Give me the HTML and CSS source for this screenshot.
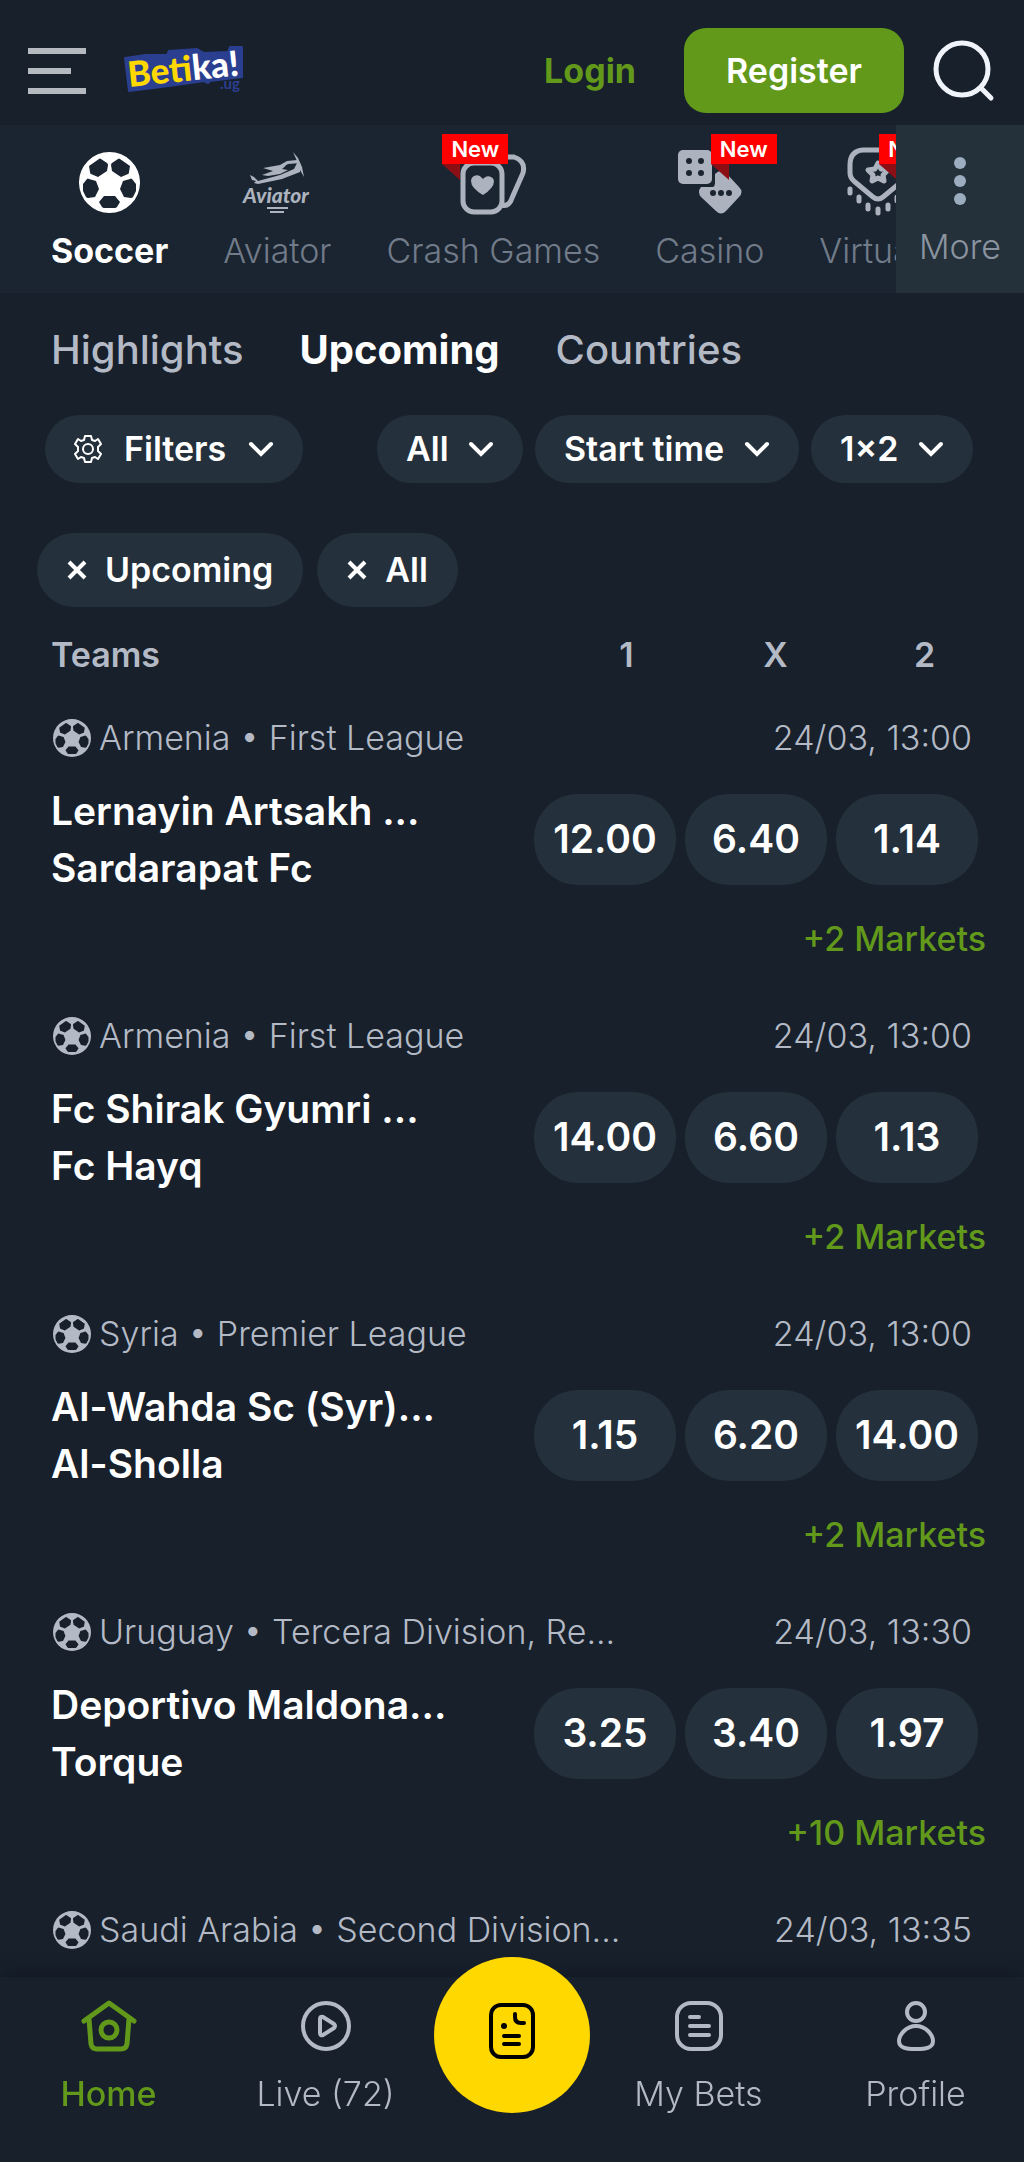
FILE: index.html
```html
<!DOCTYPE html>
<html lang="en">

	<head>
		<meta charset="UTF-8">
		<meta name="viewport" content="width=device-width, initial-scale=1">
		<title>Betika Uganda</title>
		<link rel="stylesheet" href="styles.css">
	</head>

	<body>
		<!--shared icons-->
		<svg class="sprite" aria-hidden="true">
			<symbol id="ball" viewBox="0 0 61 61">
				<path fill="currentColor" fill-rule="evenodd" d="M30.500 0a30.500 30.500 0 1 0 0 61a30.500 30.500 0 1 0 0-61zM10 14L20 7Q21 6 22 7L28 11Q29 12 29 13L28 19L19 25L12 22Q11 22 11 20zM51 14L41 7Q40 6 39 7L33 11Q32 12 32 13L33 19L42 25L49 22Q50 22 50 20zM4 32L8 27Q9 26 10 27L17 29L20 37L16 45L9 46Q8 46 7 45L4 39zM57 32L53 27Q52 26 51 27L44 29L41 37L45 45L52 46Q53 46 54 45L57 39zM25 44L36 44L41 50L38 55Q37 56 36 56L25 56Q24 56 23 55L20 50z" />
			</symbol>
			<symbol id="chevron" viewBox="0 0 26 16">
				<path d="M3 3L13 13L23 3" fill="none" stroke="currentColor" stroke-width="4" stroke-linecap="round" />
			</symbol>
			<symbol id="cross" viewBox="0 0 20 20">
				<path d="M2 2L18 18M18 2L2 18" stroke="currentColor" stroke-width="4" />
			</symbol>
		</svg>

		<header class="topbar">
			<button class="menu" aria-label="Menu">
				<span></span>
				<span></span>
				<span></span>
			</button>
			<a class="logo" href="#">
				<svg width="120" height="50" viewBox="0 0 120 50">
					<path d="M1 12L22 9L43 9L45 5L73 3L80 7L104 6L106 1L118 1L118 31L86 35L84 37L80 35L45 40L5 45z" fill="#2b3f90" stroke="#2b3f90" stroke-width="2" stroke-linejoin="round" />
					<text class="logo-text" x="5" y="41" transform="rotate(-6 5 41)"><tspan fill="#ffd800">Bet</tspan>ika!</text>
					<text class="logo-country" x="96" y="43">.ug</text>
				</svg>
			</a>
			<a class="login" href="#">Login</a>
			<button class="register">Register</button>
			<button class="search" aria-label="Search">
				<svg width="62" height="62" viewBox="0 0 62 62" fill="none" stroke="#f0f3fa" stroke-width="5" stroke-linecap="round">
					<circle cx="29" cy="29" r="26" />
					<path d="M48 48L58 58" />
				</svg>
			</button>
		</header>

		<nav class="sports">
			<div class="sports-list">
				<a class="sport choose" href="#">
					<span class="sport-icon"><svg width="61" height="61"><use href="#ball" /></svg></span>
					Soccer
				</a>
				<a class="sport" href="#">
					<span class="sport-icon">
						<svg width="70" height="62" viewBox="0 0 70 62" fill="#adb3be">
							<path d="M8 24L12 26L16 30L38 24L52 18L55 12L58 12L58 21L40 28L16 33L12 32L14 30L10 29z" />
							<path d="M21 17L38 14L45 10L55 9L58 12L46 13L40 18L46 19L38 23L26 25L20 24L31 20z" />
							<path d="M51 1L56 7L60 16L62 26L58 19L55 10z" />
							<path d="M44 14L50 13L49 17L42 18z" fill="#1a2531" />
							<text class="aviator-text" x="1" y="52">Aviator</text>
							<path d="M25 56h21v2h-21zM28 60h14v2h-14z" />
						</svg>
					</span>
					Aviator
				</a>
				<a class="sport" href="#">
					<span class="sport-icon">
						<svg width="66" height="66" viewBox="0 0 66 66" fill="none" stroke="#adb3be" stroke-width="5">
							<rect x="3" y="14" width="39" height="49" rx="11" />
							<path d="M43 8L54 8Q66 12 63 24L52 49Q49 58 42 56" />
							<path d="M23 46Q11 39 11 32A6 6 0 0 1 22 29L23 30L24 29A6 6 0 0 1 34 32Q34 39 23 46z" fill="#adb3be" stroke="none" />
						</svg>
						<span class="badge badge-left">New</span>
					</span>
					Crash Games
				</a>
				<a class="sport" href="#">
					<span class="sport-icon">
						<svg width="66" height="66" viewBox="0 0 66 66" fill="#adb3be">
							<rect x="1" y="1" width="34" height="34" rx="5" />
							<path d="M38 25Q44 19 50 25L62 38Q67 43 62 48L49 62Q44 67 39 62L24 48Q20 43 24 38L36 38Q38 37 38 34z" />
							<g fill="#1a2531">
								<circle cx="12" cy="12" r="3" />
								<circle cx="24" cy="12" r="3" />
								<circle cx="12" cy="24" r="3" />
								<circle cx="24" cy="24" r="3" />
								<circle cx="36" cy="44" r="3" />
								<circle cx="44" cy="44" r="3" />
								<circle cx="52" cy="44" r="3" />
							</g>
						</svg>
						<span class="badge">New</span>
					</span>
					Casino
				</a>
				<a class="sport" href="#">
					<span class="sport-icon">
						<svg width="66" height="70" viewBox="0 0 66 70" fill="none" stroke="#adb3be" stroke-width="5" stroke-linecap="round" stroke-linejoin="round">
							<path d="M18 3H48Q61 4 61 18V26Q61 31 56 35L38 50Q33 54 28 50L10 35Q5 31 5 26V18Q5 4 18 3z" />
							<path d="M33 16L36 22L43 23L38 28L39 34L33 31L27 34L28 28L23 23L30 22z" />
							<path d="M5 42v4M14 50v4M23 58v4M33 62v4M43 58v4M52 50v4M61 42v4" />
						</svg>
						<span class="badge">New</span>
					</span>
					Virtuals
				</a>
			</div>
			<button class="more">
				<svg width="14" height="50" viewBox="0 0 14 50" fill="#9cadbf">
					<circle cx="7" cy="7" r="6" />
					<circle cx="7" cy="25" r="6" />
					<circle cx="7" cy="43" r="6" />
				</svg>
				More
			</button>
		</nav>

		<main>
			<nav class="tabs">
				<a href="#">Highlights</a>
				<a class="choose" href="#">Upcoming</a>
				<a href="#">Countries</a>
			</nav>

			<div class="filters">
				<button class="pill filter-btn">
					<svg width="28" height="28" viewBox="0 0 28 28" fill="none" stroke="currentColor" stroke-width="2" stroke-linejoin="round">
						<path d="M11 1H17L18 5L21 6L24 4L27 9L24 12V16L27 19L24 24L21 22L18 23L17 27H11L10 23L7 22L4 24L1 19L4 16V12L1 9L4 4L7 6L10 5z" />
						<circle cx="14" cy="14" r="5" />
					</svg>
					Filters
					<svg class="chevron"><use href="#chevron" /></svg>
				</button>
				<label class="pill">
					<select aria-label="Sport">
						<option>All</option>
					</select>
					<svg class="chevron"><use href="#chevron" /></svg>
				</label>
				<label class="pill">
					<select aria-label="Sort by">
						<option>Start time</option>
					</select>
					<svg class="chevron"><use href="#chevron" /></svg>
				</label>
				<label class="pill">
					<select aria-label="Market">
						<option>1×2</option>
					</select>
					<svg class="chevron"><use href="#chevron" /></svg>
				</label>
			</div>

			<div class="chips">
				<button class="chip"><svg width="20" height="20"><use href="#cross" /></svg>Upcoming</button>
				<button class="chip"><svg width="20" height="20"><use href="#cross" /></svg>All</button>
			</div>

			<div class="columns">
				<span class="columns-teams">Teams</span>
				<span class="columns-odd">1</span>
				<span class="columns-odd">X</span>
				<span class="columns-odd">2</span>
			</div>

			<article class="match">
				<div class="match-info">
					<svg class="match-ball"><use href="#ball" /></svg>
					<span class="league">Armenia • First League</span>
					<time>24/03, 13:00</time>
				</div>
				<div class="match-body">
					<a class="teams" href="#">
						<span>Lernayin Artsakh ...</span>
						<span>Sardarapat Fc</span>
					</a>
					<div class="odds">
						<button>12.00</button>
						<button>6.40</button>
						<button>1.14</button>
					</div>
				</div>
				<a class="markets" href="#">+2 Markets</a>
			</article>

			<article class="match">
				<div class="match-info">
					<svg class="match-ball"><use href="#ball" /></svg>
					<span class="league">Armenia • First League</span>
					<time>24/03, 13:00</time>
				</div>
				<div class="match-body">
					<a class="teams" href="#">
						<span>Fc Shirak Gyumri ...</span>
						<span>Fc Hayq</span>
					</a>
					<div class="odds">
						<button>14.00</button>
						<button>6.60</button>
						<button>1.13</button>
					</div>
				</div>
				<a class="markets" href="#">+2 Markets</a>
			</article>

			<article class="match">
				<div class="match-info">
					<svg class="match-ball"><use href="#ball" /></svg>
					<span class="league">Syria • Premier League</span>
					<time>24/03, 13:00</time>
				</div>
				<div class="match-body">
					<a class="teams" href="#">
						<span>Al-Wahda Sc (Syr)...</span>
						<span>Al-Sholla</span>
					</a>
					<div class="odds">
						<button>1.15</button>
						<button>6.20</button>
						<button>14.00</button>
					</div>
				</div>
				<a class="markets" href="#">+2 Markets</a>
			</article>

			<article class="match">
				<div class="match-info">
					<svg class="match-ball"><use href="#ball" /></svg>
					<span class="league">Uruguay • Tercera Division, Re...</span>
					<time>24/03, 13:30</time>
				</div>
				<div class="match-body">
					<a class="teams" href="#">
						<span>Deportivo Maldona...</span>
						<span>Torque</span>
					</a>
					<div class="odds">
						<button>3.25</button>
						<button>3.40</button>
						<button>1.97</button>
					</div>
				</div>
				<a class="markets" href="#">+10 Markets</a>
			</article>

			<article class="match">
				<div class="match-info">
					<svg class="match-ball"><use href="#ball" /></svg>
					<span class="league">Saudi Arabia • Second Division...</span>
					<time>24/03, 13:35</time>
				</div>
			</article>
		</main>

		<!--bottom menu-->
		<nav class="bottom">
			<a class="bottom-item choose" href="#">
				<svg width="56" height="52" viewBox="0 0 56 52" fill="none" stroke="currentColor" stroke-width="5" stroke-linecap="round" stroke-linejoin="round">
					<path d="M3 21L28 3L53 21M8 19L10 44Q11 49 16 49H40Q45 49 46 44L48 19" />
					<circle cx="28" cy="30" r="8" />
				</svg>
				Home
			</a>
			<a class="bottom-item" href="#">
				<svg width="50" height="52" viewBox="0 0 50 52" fill="none" stroke="currentColor" stroke-width="4" stroke-linejoin="round">
					<circle cx="25" cy="26" r="23" />
					<path d="M19 19Q19 16 22 17L33 24Q35 26 33 28L22 35Q19 36 19 33z" />
				</svg>
				Live (72)
			</a>
			<button class="slip" aria-label="Betslip">
				<svg width="48" height="58" viewBox="0 0 48 58" fill="none" stroke="#000" stroke-width="4" stroke-linecap="round">
					<rect x="3" y="3" width="42" height="52" rx="10" />
					<path d="M27 12V15Q27 21 33 21H36M16 34H31M16 42H31" />
					<circle cx="16" cy="24" r="3" fill="#000" stroke="none" />
				</svg>
			</button>
			<a class="bottom-item" href="#">
				<svg width="50" height="52" viewBox="0 0 50 52" fill="none" stroke="currentColor" stroke-width="4" stroke-linecap="round">
					<rect x="3" y="3" width="44" height="46" rx="14" />
					<path d="M16 17H25M16 26H35M16 35H35" />
				</svg>
				My Bets
			</a>
			<a class="bottom-item" href="#">
				<svg width="40" height="52" viewBox="0 0 40 52" fill="none" stroke="currentColor" stroke-width="4">
					<circle cx="20" cy="12" r="9" />
					<path d="M20 26C30 26 37 35 37 41C37 48 30 49 20 49C10 49 3 48 3 41C3 35 10 26 20 26z" />
				</svg>
				Profile
			</a>
		</nav>
	</body>

</html>
```
FILE: styles.css
```css
* {
	margin: 0;
	padding: 0;
	box-sizing: border-box;
}

body {
	background-color: #17202b;
	color: #b4bac5;
	font-family: Inter, "Liberation Sans", sans-serif;
	font-size: 34px;
	line-height: 44px;
	padding-bottom: 185px;
}

a {
	color: inherit;
	text-decoration: none;
}

button,
select {
	border: none;
	background: none;
	color: inherit;
	font: inherit;
}

svg {
	display: block;
	flex: none;
	overflow: visible;
}

.sprite {
	position: absolute;
	width: 0;
	height: 0;
}

/*header*/
.topbar {
	display: flex;
	align-items: center;
	padding: 28px 29px 12px 28px;
}

.menu {
	display: flex;
	flex-direction: column;
	gap: 14px;
	margin-right: 38px;
}

.menu span {
	width: 58px;
	height: 6px;
	background-color: #b4bac0;
}

.menu span:nth-child(2) {
	width: 43px;
}

.logo {
	margin-right: auto;
}

.logo-text {
	font: 900 35px Lato, sans-serif;
	fill: #fff;
}

.logo-country {
	font: 700 15px Lato, sans-serif;
	fill: #2b3f90;
}

.login {
	color: #62991b;
	font-weight: 700;
	margin-right: 48px;
}

.register {
	background-color: #62991b;
	color: #fff;
	font-weight: 600;
	height: 85px;
	padding: 0 42px;
	border-radius: 22px;
	margin-right: 29px;
}

/*sports menu*/
.sports {
	display: flex;
	height: 168px;
	background-color: #1a2531;
}

.sports-list {
	flex: 1;
	min-width: 0;
	display: flex;
	gap: 55px;
	padding-left: 51px;
	overflow: hidden;
}

.sport {
	flex: none;
	display: flex;
	flex-direction: column;
	align-items: center;
	padding-top: 22px;
	color: #717b89;
	font-weight: 350;
}

.sport.choose {
	color: #fff;
	font-weight: 700;
}

.sport-icon {
	position: relative;
	display: flex;
	align-items: center;
	height: 70px;
	margin-bottom: 12px;
}

.aviator-text {
	font: italic 900 21px Lato, sans-serif;
}

.badge {
	position: absolute;
	left: 34px;
	top: -13px;
	padding: 0 9px;
	background-color: #f00;
	color: #fff;
	font-size: 22px;
	font-weight: 600;
	line-height: 30px;
}

/*folded corner of the ribbon*/
.badge::after {
	content: "";
	position: absolute;
	left: 0;
	top: 100%;
	border-top: 16px solid #8c0f16;
	border-left: 18px solid transparent;
}

.badge-left {
	left: -18px;
}

.more {
	flex: none;
	width: 128px;
	display: flex;
	flex-direction: column;
	align-items: center;
	gap: 19px;
	padding-top: 31px;
	background-color: #24303a;
	color: #8a94a0;
	font-weight: 350;
}

/*tabs*/
.tabs {
	display: flex;
	gap: 56px;
	padding: 35px 51px;
	font-size: 40px;
	font-weight: 500;
}

.tabs .choose {
	color: #fff;
	font-weight: 700;
}

/*filters*/
.filters {
	display: flex;
	gap: 12px;
	padding: 8px 51px 0 45px;
}

.pill {
	display: flex;
	align-items: center;
	gap: 19px;
	height: 68px;
	padding: 0 29px;
	border-radius: 34px;
	background-color: #24303b;
	color: #fff;
	font-weight: 600;
}

.filter-btn {
	gap: 22px;
	margin-right: auto;
}

.pill select {
	appearance: none;
	outline: none;
}

.chevron {
	width: 26px;
	height: 16px;
}

.chips {
	display: flex;
	gap: 14px;
	padding: 50px 37px 26px;
}

.chip {
	display: flex;
	align-items: center;
	gap: 18px;
	height: 74px;
	padding: 0 30px;
	border-radius: 37px;
	background-color: #24303b;
	color: #fff;
	font-weight: 600;
}

/*list*/
.columns {
	display: flex;
	padding: 0 25px 39px 51px;
	font-weight: 600;
}

.columns-teams {
	flex: 1;
}

.columns-odd {
	width: 149px;
	text-align: center;
}

.match {
	padding: 0 46px 53px 51px;
}

.match-info {
	display: flex;
	align-items: center;
	padding-right: 6px;
	margin-bottom: 22px;
	font-weight: 350;
}

.match-ball {
	width: 42px;
	height: 38px;
	margin-right: 6px;
}

.league {
	flex: 1;
	white-space: nowrap;
}

.match-body {
	display: flex;
	align-items: center;
	justify-content: space-between;
	color: #fff;
	font-size: 39px;
	font-weight: 600;
}

.teams {
	display: flex;
	flex-direction: column;
	line-height: 57px;
}

.odds {
	display: flex;
	gap: 9px;
}

.odds button {
	width: 142px;
	height: 91px;
	border-radius: 44px;
	background-color: #24303b;
}

.markets {
	display: block;
	margin-top: 21px;
	margin-right: -8px;
	color: #62991b;
	font-weight: 500;
	text-align: right;
}

/*bottom menu*/
.bottom {
	position: fixed;
	left: 0;
	right: 0;
	bottom: 0;
	height: 185px;
	display: grid;
	grid-template-columns: 1fr 1fr 156px 1fr 1fr;
	background-color: #17202b;
	box-shadow: 0 -3px 14px #121824;
}

.bottom-item {
	display: flex;
	flex-direction: column;
	align-items: center;
	gap: 20px;
	padding-top: 23px;
	font-weight: 350;
}

.bottom-item.choose {
	color: #62991b;
	font-weight: 500;
}

.slip {
	display: flex;
	align-items: center;
	justify-content: center;
	height: 156px;
	margin-top: -20px;
	padding-bottom: 8px;
	border-radius: 50%;
	background-color: #ffd800;
}
```
